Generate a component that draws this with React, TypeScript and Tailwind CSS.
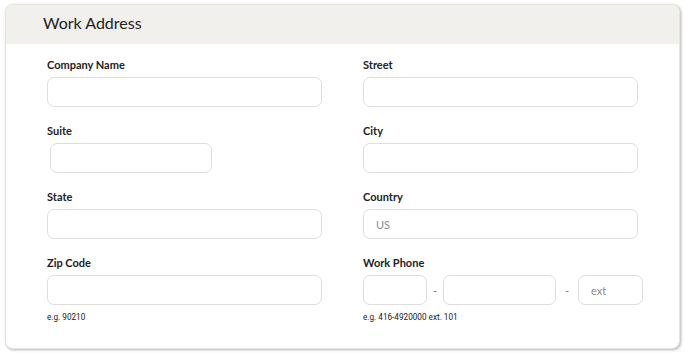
const labelCls = "block text-[11px] font-bold leading-[14px] text-[#222]";
const inputCls =
  "block h-[30px] shrink-0 rounded-[7px] border border-[#dedede] bg-white px-[12px] text-[11px] text-[#333] outline-none placeholder:text-[#8a8a8a]";
const helpCls = "mt-[7px] text-[8.2px] leading-[10px] text-[#222] font-['Roboto',sans-serif]";

function Field({
  label,
  children,
}: {
  label: string;
  children: React.ReactNode;
}) {
  return (
    <div className="h-[66px]">
      <label className={labelCls}>{label}</label>
      <div className="mt-[5px]">{children}</div>
    </div>
  );
}

export default function App() {
  return (
    <div className="min-h-[353px] w-[688px] bg-white pl-[5px] pt-[4px] font-['Lato',sans-serif]">
      <div className="h-[345px] w-[675px] overflow-hidden rounded-[8px] border border-[#e4e4e4] bg-white shadow-[1px_1px_3px_rgba(0,0,0,0.3)]">
        <div className="flex h-[39px] items-center bg-[#f1f0ec] pb-[3px] pl-[37px] text-[16px] text-[#222]">
          Work Address
        </div>
        <div className="grid grid-cols-[275px_275px] gap-x-[41px] pl-[41px] pt-[14px]">
          <Field label="Company Name">
            <input className={`${inputCls} w-[275px]`} />
          </Field>
          <Field label="Street">
            <input className={`${inputCls} w-[275px]`} />
          </Field>
          <Field label="Suite">
            <input className={`${inputCls} ml-[3px] w-[162px]`} />
          </Field>
          <Field label="City">
            <input className={`${inputCls} w-[275px]`} />
          </Field>
          <Field label="State">
            <input className={`${inputCls} w-[275px]`} />
          </Field>
          <Field label="Country">
            <input className={`${inputCls} w-[275px]`} placeholder="US" />
          </Field>
          <Field label="Zip Code">
            <input className={`${inputCls} w-[275px]`} />
            <p className={helpCls}>e.g. 90210</p>
          </Field>
          <Field label="Work Phone">
            <div className="flex items-center">
              <input className={`${inputCls} w-[64px]`} />
              <span className="w-[16px] shrink-0 text-center text-[10px] text-[#555]">-</span>
              <input className={`${inputCls} w-[113px]`} />
              <span className="w-[22px] shrink-0 text-center text-[10px] text-[#555]">-</span>
              <input className={`${inputCls} w-[65px]`} placeholder="ext" />
            </div>
            <p className={helpCls}>e.g. 416-4920000 ext. 101</p>
          </Field>
        </div>
      </div>
    </div>
  );
}
